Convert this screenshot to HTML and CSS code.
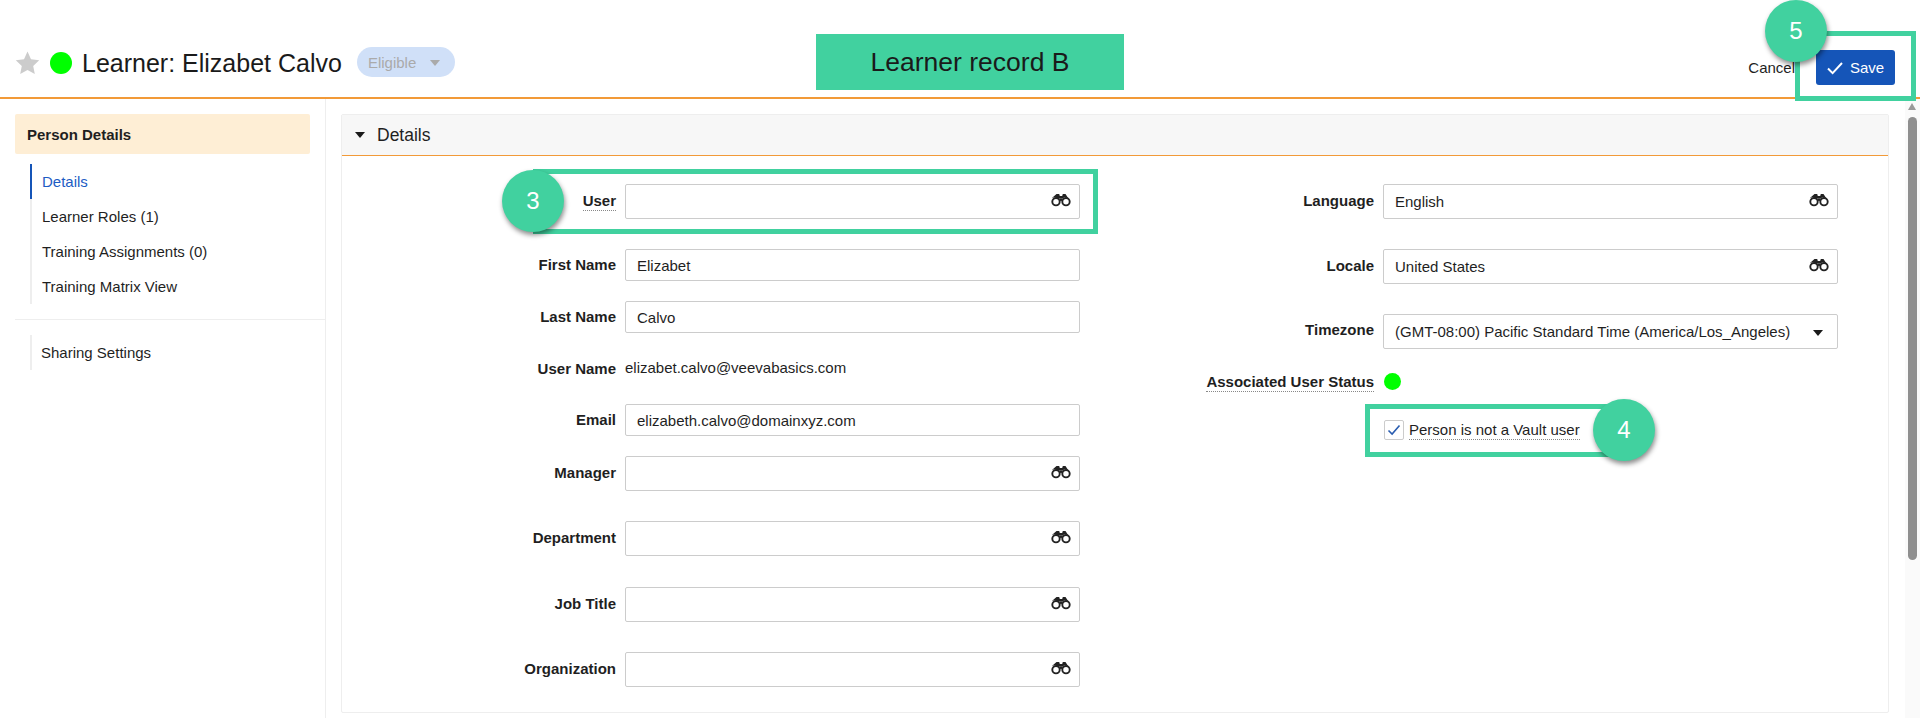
FILE: index.html
```html
<!DOCTYPE html>
<html lang="en">
<head>
<meta charset="utf-8">
<title>Learner: Elizabet Calvo</title>
<link rel="stylesheet" href="styles.css">
</head>
<body>
<svg class="defs" width="0" height="0" aria-hidden="true">
  <symbol id="binoc" viewBox="0 0 20 14">
    <path d="M5.5 1h2.7l.6 2h2.4l.6-2h2.7l2.6 4-3.5-.9-1.8 1.4-2.8-.1-2.8.1-1.8-1.4-3.5.9z" fill="#222"/>
    <circle cx="5" cy="8.7" r="3.7" fill="#fff" stroke="#222" stroke-width="1.9"/>
    <circle cx="15" cy="8.7" r="3.7" fill="#fff" stroke="#222" stroke-width="1.9"/>
    <rect x="8.5" y="5.5" width="3" height="2.4" fill="#222"/>
  </symbol>
</svg>
<div class="page">
  <header class="topbar">
    <div class="title-group">
      <svg class="star" viewBox="0 0 24 24" width="25" height="24"><path d="M12 .6l3.5 7.6 8.2 1-6 5.7 1.6 8.2L12 19l-7.3 4.1 1.6-8.2-6-5.7 8.2-1z" fill="#cccccc"/></svg>
      <span class="dot dot-title"></span>
      <h1 class="title">Learner: Elizabet Calvo</h1>
      <span class="pill">Eligible<i class="pill-caret"></i></span>
    </div>
    <div class="actions">
      <a class="cancel">Cancel</a>
      <button class="save">
        <svg viewBox="0 0 16 14" width="16" height="14"><path d="M1 7.5l4.6 4.6L15 2" fill="none" stroke="#fff" stroke-width="2"/></svg>
        Save
      </button>
    </div>
  </header>
  <div class="main">
    <nav class="sidebar">
      <div class="side-head">Person Details</div>
      <ul class="side-list">
        <li class="side-item active">Details</li>
        <li class="side-item">Learner Roles (1)</li>
        <li class="side-item">Training Assignments (0)</li>
        <li class="side-item">Training Matrix View</li>
      </ul>
      <div class="side-sep"></div>
      <ul class="side-list tight">
        <li class="side-item">Sharing Settings</li>
      </ul>
    </nav>
    <section class="content">
      <div class="panel">
        <div class="panel-head"><i class="panel-caret"></i>Details</div>
        <div class="form">
          <div class="col">
            <div class="row row-lookup">
              <label class="lbl"><span class="hint">User</span></label>
              <div class="input tall"><svg class="bino"><use href="#binoc"/></svg></div>
            </div>
            <div class="row">
              <label class="lbl">First Name</label>
              <div class="input">Elizabet</div>
            </div>
            <div class="row">
              <label class="lbl">Last Name</label>
              <div class="input">Calvo</div>
            </div>
            <div class="row row-text">
              <label class="lbl">User Name</label>
              <div class="value">elizabet.calvo@veevabasics.com</div>
            </div>
            <div class="row">
              <label class="lbl">Email</label>
              <div class="input">elizabeth.calvo@domainxyz.com</div>
            </div>
            <div class="row row-lookup">
              <label class="lbl">Manager</label>
              <div class="input tall"><svg class="bino"><use href="#binoc"/></svg></div>
            </div>
            <div class="row row-lookup">
              <label class="lbl">Department</label>
              <div class="input tall"><svg class="bino"><use href="#binoc"/></svg></div>
            </div>
            <div class="row row-lookup">
              <label class="lbl">Job Title</label>
              <div class="input tall"><svg class="bino"><use href="#binoc"/></svg></div>
            </div>
            <div class="row row-lookup">
              <label class="lbl">Organization</label>
              <div class="input tall"><svg class="bino"><use href="#binoc"/></svg></div>
            </div>
          </div>
          <div class="col">
            <div class="row row-lookup">
              <label class="lbl">Language</label>
              <div class="input tall">English<svg class="bino"><use href="#binoc"/></svg></div>
            </div>
            <div class="row row-lookup">
              <label class="lbl">Locale</label>
              <div class="input tall">United States<svg class="bino"><use href="#binoc"/></svg></div>
            </div>
            <div class="row row-tz">
              <label class="lbl">Timezone</label>
              <div class="input tall">(GMT-08:00) Pacific Standard Time (America/Los_Angeles)<i class="select-caret"></i></div>
            </div>
            <div class="row row-status">
              <label class="lbl"><span class="hint">Associated User Status</span></label>
              <span class="dot dot-status"></span>
            </div>
            <div class="row row-check">
              <span class="check">
                <svg viewBox="0 0 14 12" width="14" height="12"><path d="M1.5 6.5l3.6 3.6L12.5 1.5" fill="none" stroke="#2a5db0" stroke-width="1.6"/></svg>
              </span>
              <span class="hint check-label">Person is not a Vault user</span>
            </div>
          </div>
        </div>
      </div>
    </section>
    <aside class="scrollbar">
      <i class="scroll-up"></i>
      <i class="scroll-thumb"></i>
    </aside>
  </div>

  <div class="banner">Learner record B</div>
  <div class="box box-user"></div>
  <div class="box box-check"></div>
  <div class="box box-save"></div>
  <div class="badge badge-3">3</div>
  <div class="badge badge-4">4</div>
  <div class="badge badge-5">5</div>
</div>
</body>
</html>
```
FILE: styles.css
```css
* { box-sizing: border-box; }
html, body { margin: 0; padding: 0; height: 100%; overflow: hidden; }
body { font-family: "Liberation Sans", Arial, sans-serif; font-size: 15px; color: #1f1f1f; background: #fff; }
.defs { position: absolute; }
.page { position: relative; width: 1920px; height: 718px; display: flex; flex-direction: column; }

.topbar { height: 99px; flex: none; border-bottom: 2px solid #f29a38; display: flex; justify-content: space-between; align-items: flex-start; padding: 47px 25px 0 15px; }
.title-group { display: flex; align-items: center; height: 30px; }
.star { margin-top: 2px; }
.dot { display: block; border-radius: 50%; background: #00ff00; }
.dot-title { width: 22px; height: 22px; margin-left: 10px; margin-top: 2px; }
.title { font-size: 25px; font-weight: 400; margin: 2px 0 0 10px; color: #1a1a1a; line-height: 30px; }
.pill { margin-left: 15px; width: 98px; height: 30px; border-radius: 15px; background: #d0e0f8; color: #aaaaaa; font-size: 15px; display: flex; align-items: center; padding-left: 11px; }
.pill-caret { margin-left: 14px; margin-top: 2px; border: 5px solid transparent; border-top: 6px solid #aaaaaa; border-bottom: 0; width: 0; height: 0; }
.actions { display: flex; align-items: center; margin-top: 3px; }
.cancel { font-size: 15px; color: #1f1f1f; margin-right: 21px; }
.save { width: 79px; height: 35px; border: 0; border-radius: 3px; background: #1555b8; color: #fff; font: 15px "Liberation Sans", Arial, sans-serif; display: flex; align-items: center; gap: 7px; padding: 0 0 0 11px; }

.main { flex: 1; display: flex; min-height: 0; }
.sidebar { width: 326px; flex: none; border-right: 1px solid #eeeeee; padding: 15px 0 0 15px; }
.side-head { width: 295px; height: 40px; background: #feeed5; border-radius: 2px; font-weight: 700; font-size: 15px; line-height: 41px; padding-left: 12px; margin-bottom: 10px; }
.side-list { list-style: none; margin: 0 0 0 15px; padding: 0; border-left: 2px solid #eeeeee; }
.side-item { height: 35px; line-height: 36px; padding-left: 10px; font-size: 15px; margin-left: -2px; border-left: 2px solid transparent; }
.side-item.active { color: #1d5cc4; border-left-color: #1555b8; }
.side-list.tight .side-item { padding-left: 9px; }
.side-sep { height: 1px; background: #eeeeee; margin: 15px 0; }

.content { flex: 1; min-width: 0; padding: 15px 16px 5px 15px; }
.panel { height: 100%; border: 1px solid #eeeeee; border-radius: 2px; }
.panel-head { height: 41px; background: #f7f7f7; border-bottom: 1px solid #f29a38; font-size: 17.5px; line-height: 40px; display: flex; align-items: center; padding-left: 13px; }
.panel-caret { width: 0; height: 0; border: 5px solid transparent; border-top: 6px solid #1a1a1a; border-bottom: 0; margin-right: 12px; }

.form { display: flex; padding-top: 28px; }
.col { width: 759px; }
.row { display: flex; align-items: flex-start; height: 52px; }
.row-lookup { height: 65.2px; }
.row-text { height: 51px; }
.row-tz { height: 53px; }
.lbl { width: 274px; flex: none; text-align: right; font-weight: 700; font-size: 15px; line-height: 32px; }
.row-lookup .lbl { line-height: 33px; }
.row-status .lbl { line-height: 30px; }
.hint { border-bottom: 1px dotted #888888; padding-bottom: 1px; }
.input { position: relative; width: 455px; height: 32px; margin-left: 9px; border: 1px solid #cccccc; border-radius: 2px; padding-left: 11px; line-height: 31px; font-size: 15px; background: #fff; }
.input.tall { height: 35px; line-height: 34px; }
.value { margin-left: 9px; line-height: 30px; font-size: 15px; }
.bino { position: absolute; right: 8px; top: 8px; width: 20px; height: 14px; }
.select-caret { position: absolute; right: 14px; top: 15px; width: 0; height: 0; border: 5px solid transparent; border-top: 6px solid #1a1a1a; border-bottom: 0; }

.col + .col .lbl { width: 273px; }
.row-status { height: 47px; }
.dot-status { width: 17px; height: 17px; margin-left: 10px; margin-top: 6px; }
.row-check { align-items: center; height: 32px; padding-left: 283px; }
.check { width: 20px; height: 20px; border: 1px solid #cccccc; border-radius: 2px; display: flex; align-items: center; justify-content: center; }
.check-label { margin-left: 5px; font-size: 15px; }

.scrollbar { width: 15px; flex: none; background: #fafafa; position: relative; }
.scroll-up { position: absolute; left: 3px; top: 4px; width: 0; height: 0; border: 4.5px solid transparent; border-bottom: 7px solid #999999; border-top: 0; }
.scroll-thumb { position: absolute; left: 3px; top: 18px; width: 9px; height: 443px; border-radius: 5px; background: #8f8f8f; }

.banner { position: absolute; left: 816px; top: 34px; width: 308px; height: 56px; background: #41d19f; color: #1a1a1a; font-size: 26.5px; display: flex; align-items: center; justify-content: center; }
.box { position: absolute; border: 5px solid #41d19f; }
.box-user { left: 533px; top: 169px; width: 565px; height: 65px; }
.box-check { left: 1365px; top: 404px; width: 250px; height: 53px; }
.box-save { left: 1795px; top: 31px; width: 121px; height: 70px; }
.badge { position: absolute; border-radius: 50%; background: #41d19f; color: #fff; font-size: 24px; display: flex; align-items: center; justify-content: center; box-shadow: 1px 3px 5px rgba(0,0,0,.45); }
.badge-3 { left: 502px; top: 170px; width: 62px; height: 62px; }
.badge-4 { left: 1593px; top: 399px; width: 62px; height: 62px; }
.badge-5 { left: 1765px; top: 0; width: 62px; height: 62px; }
```
